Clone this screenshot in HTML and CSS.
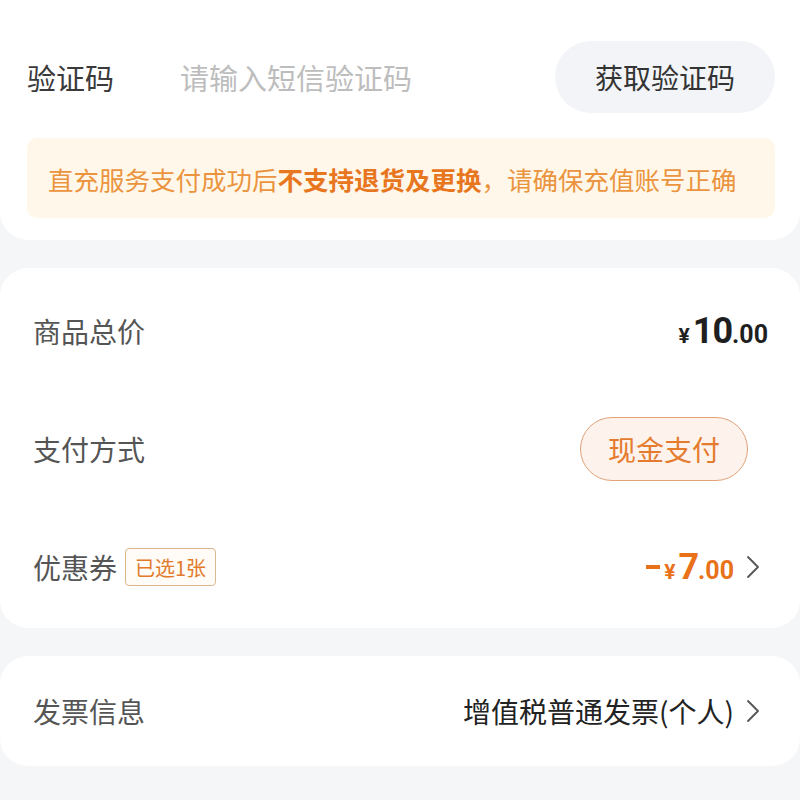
FILE: index.html
```html
<!DOCTYPE html>
<html lang="zh-CN">
<head>
<meta charset="utf-8">
<title>订单确认</title>
<link rel="stylesheet" href="styles.css">
</head>
<body>
<div class="page">
  <section class="card card-top">
    <div class="code-row">
      <span class="code-label">验证码</span>
      <span class="code-input">请输入短信验证码</span>
      <button class="code-btn">获取验证码</button>
    </div>
    <div class="notice">直充服务支付成功后<b>不支持退货及更换</b>，请确保充值账号正确</div>
  </section>

  <section class="card card-price">
    <div class="row">
      <span class="label">商品总价</span>
      <span class="amount"><span class="cur">¥</span><span class="int">10</span><span class="dec">.00</span></span>
    </div>
    <div class="row">
      <span class="label">支付方式</span>
      <span class="pay-pill">现金支付</span>
    </div>
    <div class="row">
      <span class="label">优惠券<span class="tag">已选1张</span></span>
      <span class="right">
        <span class="amount discount"><span class="minus" aria-label="-"></span><span class="cur">¥</span><span class="int">7</span><span class="dec">.00</span></span>
        <svg class="chev" viewBox="0 0 14 24" width="14" height="24"><path d="M2 2 L12 12 L2 22" fill="none" stroke="#555" stroke-width="1.8" stroke-linecap="round" stroke-linejoin="round"/></svg>
      </span>
    </div>
  </section>

  <section class="card card-invoice">
    <div class="row row-invoice">
      <span class="label">发票信息</span>
      <span class="right">
        <span class="value">增值税普通发票(个人)</span>
        <svg class="chev" viewBox="0 0 14 24" width="14" height="24"><path d="M2 2 L12 12 L2 22" fill="none" stroke="#555" stroke-width="1.8" stroke-linecap="round" stroke-linejoin="round"/></svg>
      </span>
    </div>
  </section>
</div>
</body>
</html>
```

FILE: styles.css
```css
* { box-sizing: border-box; }
html, body {
  margin: 0;
  padding: 0;
  background: #f5f6f8;
}
body {
  font-family: "Noto Sans CJK SC", "Noto Sans", sans-serif;
  width: 800px;
  height: 800px;
  overflow: hidden;
}
.page {
  display: flex;
  flex-direction: column;
  gap: 28px;
}
.card {
  background: #ffffff;
  border-radius: 28px;
}
.card-top {
  border-radius: 0 0 28px 28px;
  padding: 41px 25px 22px 27px;
  display: flex;
  flex-direction: column;
  gap: 25px;
}
.code-row {
  display: flex;
  align-items: center;
  height: 72px;
}
.code-label {
  width: 153px;
  font-size: 29px;
  color: #3a3a3a;
}
.code-input {
  flex: 1;
  font-size: 29px;
  color: #bdbdbd;
}
.code-btn {
  width: 220px;
  height: 72px;
  border: none;
  border-radius: 36px;
  background: #f2f4f7;
  font-family: inherit;
  font-size: 28px;
  color: #333333;
  padding: 0;
}
.notice {
  height: 80px;
  border-radius: 10px;
  background: #fff8ea;
  display: flex;
  align-items: center;
  padding-left: 21px;
  font-size: 25.5px;
  color: #eb943f;
  white-space: nowrap;
}
.notice b {
  color: #e8761e;
  font-weight: 700;
}
.card-price {
  padding: 4px 32px 2px 33px;
}
.row {
  height: 118px;
  display: flex;
  align-items: center;
  justify-content: space-between;
}
.label {
  font-size: 28px;
  color: #555555;
  display: flex;
  align-items: center;
}
.amount {
  font-family: "Roboto", "Noto Sans", sans-serif;
  font-weight: 700;
  color: #1f1f1f;
  display: flex;
  align-items: baseline;
}
.amount .cur {
  font-size: 21px;
  margin-right: 3px;
}
.amount .int {
  font-size: 36px;
  letter-spacing: -1px;
}
.amount .dec {
  font-size: 25px;
}
.pay-pill {
  width: 168px;
  height: 64px;
  border: 1.5px solid #e2a27a;
  border-radius: 32px;
  background: #fdf3ec;
  color: #e47b2e;
  font-size: 28px;
  display: flex;
  align-items: center;
  justify-content: center;
  margin-right: 20px;
}
.tag {
  margin-left: 8px;
  height: 38px;
  padding: 0 9px;
  border: 1.5px solid #dcb78f;
  border-radius: 4px;
  background: #fffbf6;
  color: #e27a2c;
  font-size: 20px;
  display: inline-flex;
  align-items: center;
}
.right {
  display: flex;
  align-items: center;
}
.discount {
  color: #e8711a;
}
.discount .minus {
  display: inline-block;
  width: 14px;
  height: 4px;
  background: #e8711a;
  align-self: center;
  margin-right: 4px;
  margin-top: 0;
}
.chev {
  margin-left: 12px;
  margin-right: 8px;
}
.card-invoice {
  padding: 0 32px 0 33px;
}
.row-invoice {
  height: 110px;
}
.value {
  font-size: 28px;
  color: #222222;
}
```
